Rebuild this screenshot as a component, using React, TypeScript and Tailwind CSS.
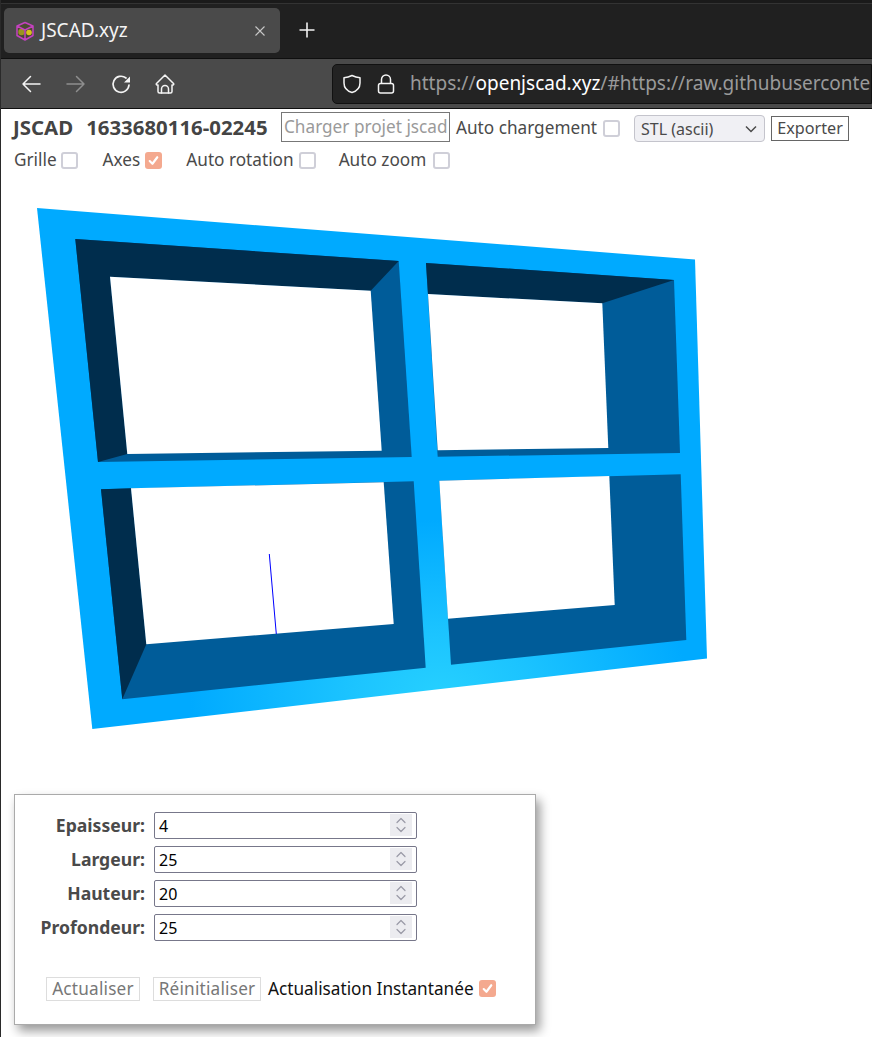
const font = { fontFamily: '"Noto Sans", sans-serif' };

function Check({ on }: { on?: boolean }) {
  return on ? (
    <span className="flex h-[17px] w-[17px] shrink-0 items-center justify-center rounded-[3px] bg-[#f4a98f]">
      <svg width="13" height="13" viewBox="0 0 12 12" fill="none" stroke="white" strokeWidth="2" strokeLinecap="round" strokeLinejoin="round">
        <path d="M2.500 6.500 5 9l4.500-6" />
      </svg>
    </span>
  ) : (
    <span className="block h-[17px] w-[17px] shrink-0 rounded-[3px] border-2 border-[#cfcfd8] bg-white" />
  );
}

function NumberField({ label, value }: { label: string; value: string }) {
  return (
    <div className="flex h-[28px] items-center">
      <label className="w-[130px] shrink-0 text-right text-[17.6px] font-bold leading-[24px] text-[#4a4a4a]">{label}</label>
      <div className="ml-[9px] flex h-[27px] w-[263px] items-center justify-between rounded-[2px] border border-[#77778a] bg-white pl-[4px] pr-[4px]">
        <span className="pt-[2px] text-[16px] text-black">{value}</span>
        <span className="flex h-[22px] w-[22px] flex-col items-center justify-center bg-[#ececf0]">
          <svg width="12" height="18" viewBox="0 0 12 18" fill="none" stroke="#9a9aa6" strokeWidth="1.2" strokeLinecap="round" strokeLinejoin="round">
            <path d="M2 6.500 6 2.500l4 4M2 11.500l4 4 4-4" />
          </svg>
        </span>
      </div>
    </div>
  );
}

function Scene() {
  return (
    <svg className="-ml-px block" width="872" height="624" viewBox="0 170 872 624">
      <defs>
        <radialGradient id="glow" gradientUnits="userSpaceOnUse" cx="0" cy="0" r="1" gradientTransform="translate(440 695) scale(250 175)">
          <stop offset="0" stopColor="#26d0ff" />
          <stop offset="0.35" stopColor="#1cc4ff" />
          <stop offset="1" stopColor="#00aaff" />
        </radialGradient>
      </defs>
      <polygon points="37,208 695,259.500 707,658.500 92.300,729" fill="url(#glow)" />
      {/* top left cell */}
      <polygon points="75.300,239 398.700,261 411.700,457 98,462" fill="#005c99" />
      <polygon points="75.300,239 398.700,261 370.700,290.700 110,276.700 127.300,454 98,462" fill="#002d4d" />
      <polygon points="110,276.700 370.700,290.700 381.700,450.700 127.300,454" fill="#ffffff" />
      {/* top right cell */}
      <polygon points="426,263 674,280 680,453 437.700,456.700" fill="#005c99" />
      <polygon points="426,263 674,280 602.300,303.300 428,294" fill="#002d4d" />
      <polygon points="428,294 602.300,303.300 608.300,448 437.700,450.300" fill="#ffffff" />
      {/* bottom left cell */}
      <polygon points="101,489.300 413.700,481.300 425.700,667.700 122.300,699.300" fill="#005c99" />
      <polygon points="101,489.300 131,488.300 146.300,644.300 122.300,699.300" fill="#002d4d" />
      <polygon points="131,488.300 383.700,482.300 393.700,624 146.300,644.300" fill="#ffffff" />
      <line x1="269.300" y1="554" x2="276.300" y2="634" stroke="#0000ff" strokeWidth="1" />
      {/* bottom right cell */}
      <polygon points="439.300,480.700 680.700,474.300 686.300,640 451,664.700" fill="#005c99" />
      <polygon points="439.300,480.700 609.300,476 614.700,605 448,618.700" fill="#ffffff" />
    </svg>
  );
}

export default function App() {
  return (
    <div className="h-[1037px] w-[872px] overflow-hidden border-l border-[#2a2a2a] bg-white" style={font}>
      {/* Browser chrome */}
      <div className="-ml-px h-[58px] border-t-[3px] border-[#1a1a1a] bg-[#202020]">
        <div className="flex h-[55px] items-start border-t border-[#333] pl-[4px] pt-[4px]">
          <div className="flex h-[45px] w-[276px] items-center rounded-[5px] bg-[#4a4a4a] pl-[11px] pr-[14px]">
            <svg className="shrink-0" width="20" height="20" viewBox="0 0 20 20">
              <path d="M10 1.500 18 5v9.500l-8 4.500-8-4.500V5Z" fill="#4a4a30" />
              <circle cx="6.500" cy="11" r="3.200" fill="#9a9420" />
              <circle cx="14" cy="11.500" r="2.800" fill="#d8c01c" />
              <path d="M10 1.500 18 5v9.500l-8 4.500-8-4.500V5ZM2 5l8 4 8-4M10 9v10" fill="none" stroke="#c442c0" strokeWidth="1.500" strokeLinejoin="round" />
            </svg>
            <span className="ml-[6px] flex-1 text-[19px] text-[#f4f4f4]">JSCAD.xyz</span>
            <svg className="shrink-0" width="12" height="12" viewBox="0 0 12 12" stroke="#c8c8c8" strokeWidth="1.100" fill="none">
              <path d="M1.500 1.500l9 9M10.500 1.500l-9 9" />
            </svg>
          </div>
          <svg className="ml-[19px] mt-[14px] shrink-0" width="16" height="16" viewBox="0 0 16 16" stroke="#f2f2f2" strokeWidth="1.600" fill="none">
            <path d="M8 .5v15M.5 8h15" />
          </svg>
        </div>
      </div>
      <div className="relative -ml-px flex h-[51px] items-center border-y border-[#0f0f0f] bg-[#4a4a4a]">
        <span className="absolute bottom-0 left-0 top-[14px] w-px bg-[#1a2030]" />
        <svg className="ml-[21px] shrink-0" width="20" height="20" viewBox="0 0 20 20" fill="none" stroke="#f4f4f4" strokeWidth="1.500" strokeLinecap="round" strokeLinejoin="round">
          <path d="M2 10h17M9.500 2.500 2 10l7.500 7.500" />
        </svg>
        <svg className="ml-[25px] shrink-0" width="20" height="20" viewBox="0 0 20 20" fill="none" stroke="#8e8e8e" strokeWidth="1.500" strokeLinecap="round" strokeLinejoin="round">
          <path d="M1 10h17M10.500 2.500 18 10l-7.500 7.500" />
        </svg>
        <svg className="ml-[25px] shrink-0" width="20" height="20" viewBox="0 0 20 20" fill="none" stroke="#f4f4f4" strokeWidth="1.700" strokeLinecap="round">
          <path d="M18 11a8 8 0 1 1-3-7" />
          <path d="M19 2.500v6h-6Z" fill="#f4f4f4" stroke="none" />
        </svg>
        <svg className="ml-[24px] shrink-0" width="20" height="20" viewBox="0 0 20 20" fill="none" stroke="#f4f4f4" strokeWidth="1.500" strokeLinecap="round" strokeLinejoin="round">
          <path d="M10 1 1.500 9.500c-.5.6-.2 1.500.6 1.500H3v6.500a1.500 1.500 0 0 0 1.500 1.500h11a1.500 1.500 0 0 0 1.500-1.500V11h.9c.8 0 1.100-.9.6-1.500Z" />
          <path d="M6.500 19v-4a3.500 3.500 0 0 1 7 0v4" />
        </svg>
        <div className="ml-[157px] flex h-[40px] flex-1 items-center overflow-hidden rounded-l-[5px] border border-[#111] bg-[#232323] pl-[9px]">
          <svg className="shrink-0" width="20" height="20" viewBox="0 0 20 20" fill="none" stroke="#f4f4f4" strokeWidth="1.500" strokeLinejoin="round">
            <path d="M10 1.500c3 1.500 5 2 8 2.200V9c0 4.500-3 8-8 9.500C5 17 2 13.500 2 9V3.700c3-.2 5-.7 8-2.200Z" />
          </svg>
          <svg className="ml-[15px] shrink-0" width="18" height="20" viewBox="0 0 18 20" fill="none" stroke="#f4f4f4" strokeWidth="1.500">
            <rect x="1.500" y="9.500" width="15" height="9.500" rx="2" />
            <path d="M4.500 9.500V5.500a4.500 4.500 0 0 1 9 0v4" />
          </svg>
          <span className="ml-[15px] whitespace-nowrap text-[19px] text-[#9a9a9a]">
            https://<span className="text-white">openjscad.xyz</span>/#https://raw.githubusercontent.com/
          </span>
        </div>
      </div>

      {/* Toolbar */}
      <div className="flex h-[33px] items-end pl-[12px] text-[17.2px] text-[#4a4a4a]">
        <span className="flex w-[268px] gap-[13px] whitespace-nowrap pb-[1px] text-[20.4px] font-bold leading-[28px] text-[#444]">
          <span>JSCAD</span>
          <span>1633680116-02245</span>
        </span>
        <div className="flex h-[30px] w-[169px] items-center overflow-hidden whitespace-nowrap border border-[#777] pl-[2px] text-[#9a9a9a]">
          Charger projet jscad
        </div>
        <span className="ml-[6px] self-end whitespace-nowrap leading-[28px]">Auto chargement</span>
        <span className="mb-[5px] ml-[6px]"><Check /></span>
        <div className="ml-[14px] flex h-[27px] w-[131px] items-center justify-between rounded-[4px] border border-[#c4c4cc] bg-[#f0f0f4] pl-[6px] pr-[7px] text-[16px]">
          STL (ascii)
          <svg width="12" height="8" viewBox="0 0 12 8" fill="none" stroke="#4a4a4a" strokeWidth="1.500"><path d="M1 1.500l5 5 5-5" /></svg>
        </div>
        <div className="mb-[1px] ml-[6px] flex h-[25px] w-[78px] items-center justify-center border border-[#666] text-[16.2px]">Exporter</div>
      </div>
      <div className="flex h-[28px] items-center pl-[13px] pt-[8px] text-[17.2px] text-[#4a4a4a]">
        <span>Grille</span>
        <span className="ml-[4px]"><Check /></span>
        <span className="ml-[25px]">Axes</span>
        <span className="ml-[5px]"><Check on /></span>
        <span className="ml-[24px]">Auto rotation</span>
        <span className="ml-[5px]"><Check /></span>
        <span className="ml-[23px]">Auto zoom</span>
        <span className="ml-[7px]"><Check /></span>
      </div>

      <Scene />

      {/* Parameters panel */}
      <div className="ml-[13px] h-[231px] w-[522px] border border-[#aaa] bg-white pt-[16px] shadow-[4px_6px_10px_rgba(0,0,0,0.4)]">
        <div className="flex flex-col gap-[6px]">
          <NumberField label="Epaisseur:" value="4" />
          <NumberField label="Largeur:" value="25" />
          <NumberField label="Hauteur:" value="20" />
          <NumberField label="Profondeur:" value="25" />
        </div>
        <div className="ml-[31px] mt-[35px] flex items-center text-[17.2px]">
          <span className="flex h-[24px] w-[94px] items-center justify-center border border-[#ddd] tracking-[0.2px] text-[#777]">Actualiser</span>
          <span className="ml-[13px] flex h-[24px] w-[108px] items-center justify-center border border-[#ddd] tracking-[0.2px] text-[#777]">Réinitialiser</span>
          <span className="ml-[7px] whitespace-nowrap text-[#111]">Actualisation Instantanée</span>
          <span className="ml-[5px]"><Check on /></span>
        </div>
      </div>
    </div>
  );
}
